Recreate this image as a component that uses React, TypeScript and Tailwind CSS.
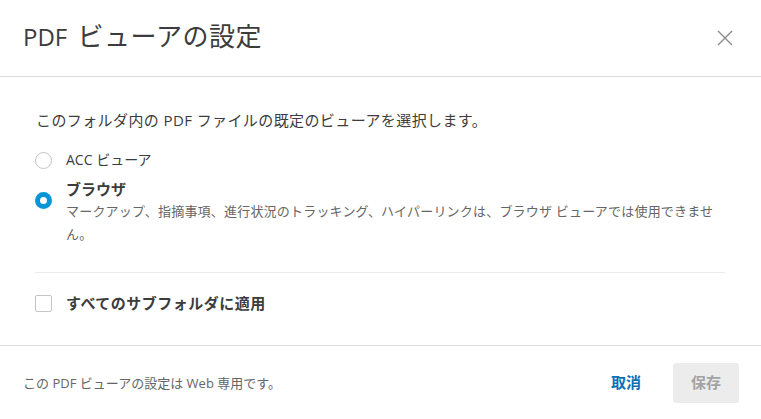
import React from "react";

export default function App() {
  return (
    <div
      className="w-[761px] h-[419px] bg-white flex flex-col text-[#3c3c3c] overflow-hidden"
      style={{ fontFamily: '"Open Sans", "Noto Sans CJK JP", sans-serif' }}
    >
      <div className="h-[77px] shrink-0 border-b border-[#dcdcdc] flex items-center justify-between pl-[23px] pr-[28px]">
        <h1 className="text-[24px] leading-[30px] font-normal text-[#3c3c3c] -mt-[4px]">
          PDF <span className="ml-[4px] text-[26px] tracking-[0.5px]">ビューアの設定</span>
        </h1>
        <svg width="16" height="16" viewBox="0 0 16 16" className="text-[#8a8a8a]">
          <path d="M1 1 L15 15 M15 1 L1 15" stroke="currentColor" strokeWidth="1.4" fill="none" />
        </svg>
      </div>

      <div className="flex-1 flex flex-col pl-[35px] pr-[36px]">
        <p className="mt-[33px] pl-[1px] text-[15px] leading-[20px] tracking-[0.4px]">
          このフォルダ内の PDF ファイルの既定のビューアを選択します。
        </p>

        <div className="mt-[20px] flex items-center gap-[14px]">
          <span className="w-[17px] h-[17px] rounded-full border border-[#c4c4c4] bg-white shrink-0" />
          <span className="text-[14px] leading-[20px]">ACC ビューア</span>
        </div>

        <div className="mt-[9px] flex items-start gap-[14px]">
          <span className="mt-[13px] w-[17px] h-[17px] rounded-full border-[5px] border-[#0696d7] bg-white shrink-0" />
          <div className="flex flex-col">
            <span className="text-[15px] leading-[20px] font-bold">ブラウザ</span>
            <span className="mt-[1px] text-[13px] leading-[23px] tracking-[0.2px] text-[#666666]">
              マークアップ、指摘事項、進行状況のトラッキング、ハイパーリンクは、ブラウザ ビューアでは使用できませ
              <br />
              ん。
            </span>
          </div>
        </div>

        <div className="mt-[26px] border-t border-[#eaeaea]" />

        <div className="mt-[20px] flex items-center gap-[14px]">
          <span className="w-[17px] h-[17px] rounded-[2px] border border-[#c4c4c4] bg-white shrink-0" />
          <span className="text-[15px] leading-[20px] font-bold tracking-[0.5px]">すべてのサブフォルダに適用</span>
        </div>
      </div>

      <div className="h-[74px] shrink-0 border-t border-[#dcdcdc] flex items-center justify-between pl-[23px] pr-[22px]">
        <span className="text-[13px] leading-[20px] text-[#666666]">この PDF ビューアの設定は Web 専用です。</span>
        <div className="flex items-center">
          <button className="text-[15px] font-bold text-[#0b6fb4] mr-[32px]">取消</button>
          <button className="w-[66px] h-[40px] rounded-[3px] bg-[#ececec] text-[15px] font-bold text-[#a3a3a3]">
            保存
          </button>
        </div>
      </div>
    </div>
  );
}
